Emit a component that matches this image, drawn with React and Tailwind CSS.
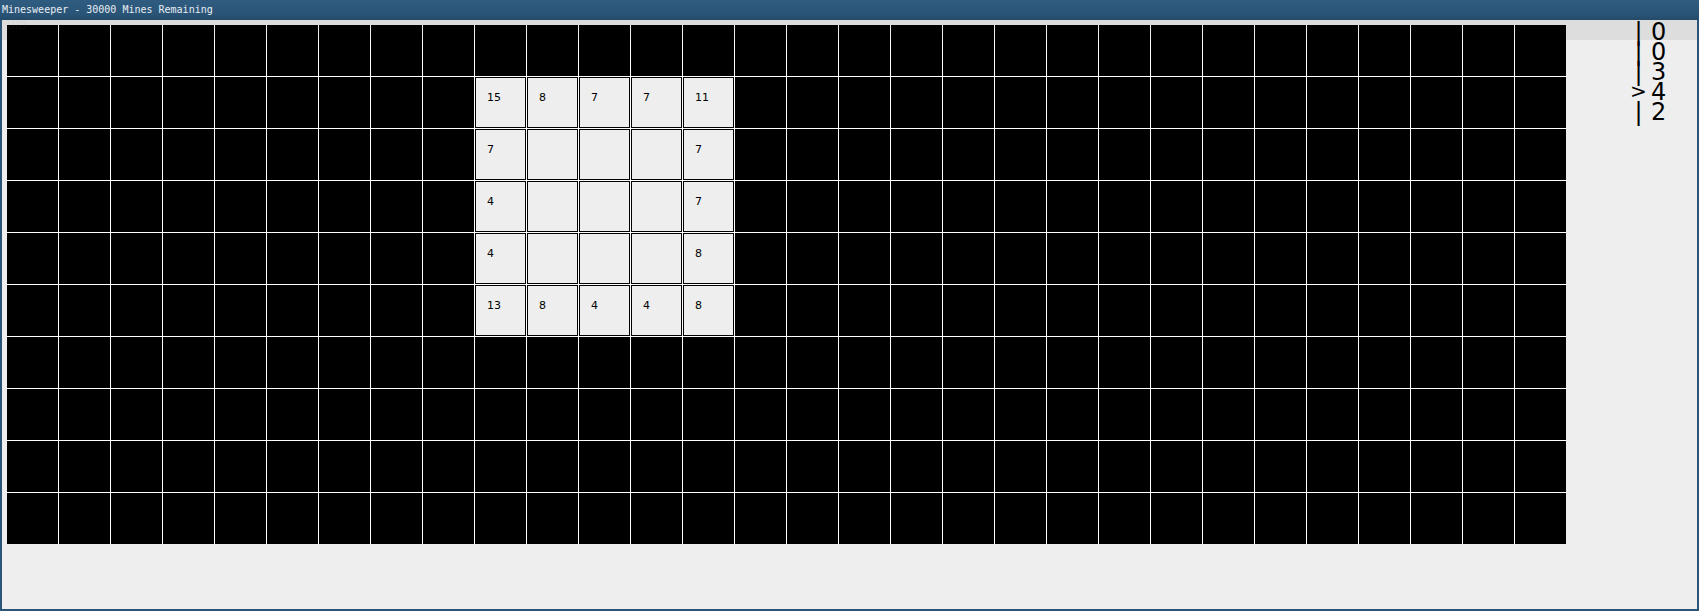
const R = {
  "1,9": "15", "1,10": "8", "1,11": "7", "1,12": "7", "1,13": "11",
  "2,9": "7", "2,10": "", "2,11": "", "2,12": "", "2,13": "7",
  "3,9": "4", "3,10": "", "3,11": "", "3,12": "", "3,13": "7",
  "4,9": "4", "4,10": "", "4,11": "", "4,12": "", "4,13": "8",
  "5,9": "13", "5,10": "8", "5,11": "4", "5,12": "4", "5,13": "8",
};

const cells = [];
for (let r = 0; r < 10; r++) for (let c = 0; c < 30; c++) cells.push([r, c]);

const levels = [
  ["|", "0"],
  ["|", "0"],
  ["|", "3"],
  [">", "4"],
  ["|", "2"],
];

export default function App() {
  return (
    <div className="relative flex h-[611px] w-[1699px] flex-col overflow-hidden bg-[#2a5578]">
      <div className="flex h-[20px] shrink-0 items-center bg-[linear-gradient(#2f5c80,#2a5578_70%,#234a69)] pl-[2px] pb-[1px] font-['DejaVu_Sans_Mono',monospace] text-[10px] leading-none text-[#e8eef2] antialiased">
        Minesweeper - 30000 Mines Remaining
      </div>
      <div className="relative mx-[2px] mb-[2px] flex min-h-0 flex-1 items-start bg-[#eeeeee] pt-[5px] pl-[5px]">
        <div className="grid shrink-0 grid-cols-[repeat(30,51px)] grid-rows-[repeat(10,51px)] gap-px bg-white">
          {cells.map(([r, c]) => {
            const v = R[`${r},${c}`];
            if (v === undefined) return <div key={`${r}-${c}`} className="bg-black" />;
            return (
              <div
                key={`${r}-${c}`}
                className="border border-black bg-[#eeeeee] pt-[13px] pl-[11px] font-['DejaVu_Sans',sans-serif] text-[11px] leading-[14px] text-black antialiased"
              >
                {v}
              </div>
            );
          })}
        </div>
        <div className="-mt-[3px] flex flex-col pl-[60px] font-['DejaVu_Sans',sans-serif] text-[24px] leading-[20px] text-black antialiased">
          {levels.map(([m, n], i) => (
            <div key={i} className="flex h-[20px]">
              <span className={m === ">" ? "w-[25px] text-center text-[20px] leading-[18px]" : "w-[25px] text-center"}>{m}</span>
              <span>{n}</span>
            </div>
          ))}
        </div>
        <div className="pointer-events-none absolute inset-x-0 top-0 h-[20px] bg-black/[0.07]" />
        <div className="pointer-events-none absolute left-[5px] top-0 font-['DejaVu_Sans',sans-serif] text-[11px] leading-[12px] text-[#8888881a]">
          UID
        </div>
      </div>
    </div>
  );
}
